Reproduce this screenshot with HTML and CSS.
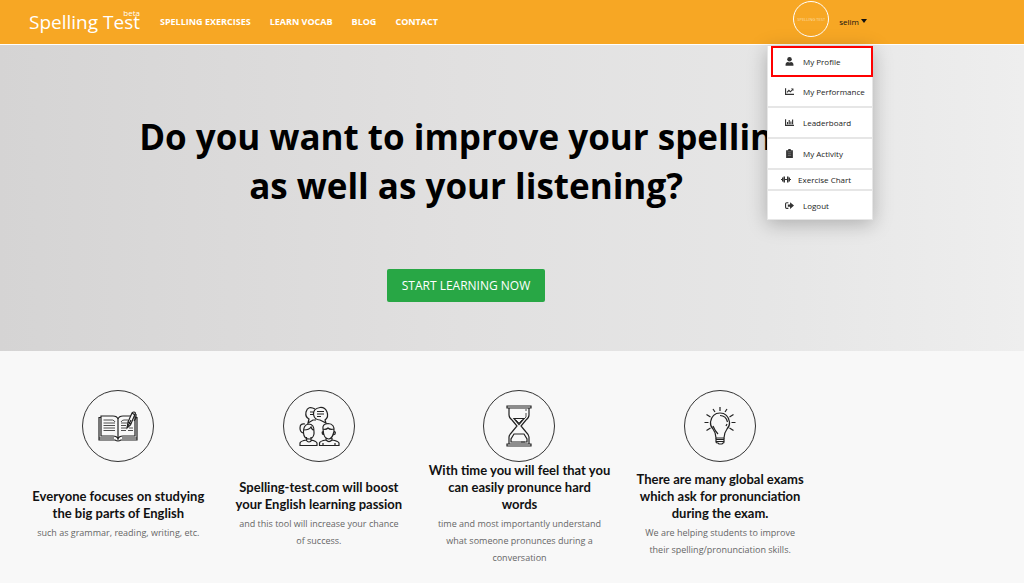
FILE: index.html
```html
<!doctype html>
<html lang="en">
<head>
	<meta charset="utf-8">
	<meta name="viewport" content="width=device-width, initial-scale=1">
	<title>Spelling Test</title>
	<link rel="stylesheet" href="styles.css">
</head>
<body>
	<header class="header">
		<a class="logo" href="#">Spelling Test<span class="beta">beta</span></a>
		<nav class="nav">
			<a href="#">SPELLING EXERCISES</a>
			<a href="#">LEARN VOCAB</a>
			<a href="#">BLOG</a>
			<a href="#">CONTACT</a>
		</nav>
		<div class="user">
			<span class="avatar">SPELLING TEST</span>
			<button class="user-name" type="button">selim<span class="caret"></span></button>
			<div class="menu">
				<a class="active" href="#">
					<svg viewBox="0 0 16 16"><circle cx="8" cy="4.2" r="4"/><path d="M1 15.5v-2.2C1 10.600 3 9 5 9c1.800 1 4.200 1 6 0 2 0 4 1.600 4 4.300v2.200z"/></svg>
					My Profile
				</a>
				<a href="#">
					<svg viewBox="0 0 16 16"><path d="M0 2h2v10h14v2H0z"/><path d="M3.500 9.500 7 6l2.500 2.500 4-4" fill="none" stroke="#333" stroke-width="2"/><path d="M10.500 2.500H15V7z"/></svg>
					My Performance
				</a>
				<a href="#">
					<svg viewBox="0 0 16 16"><path d="M0 2h2v10h14v2H0zM3.500 7h2v4h-2zM6.500 3.500h2V11h-2zM9.500 6h2v5h-2zM12.500 2.500h2V11h-2z"/></svg>
					Leaderboard
				</a>
				<a href="#">
					<svg viewBox="0 0 16 16"><path d="M2 2h3.500a2.500 2.500 0 0 1 5 0H14v14H2z"/><path d="M4.500 5h7M5 8.500h6M5 11.500h6" stroke="#999" stroke-width="1"/></svg>
					My Activity
				</a>
				<a class="short" href="#">
					<svg class="wide" viewBox="0 0 20 16"><path d="M0 7h2v2H0zM2 4h2.500v8H2zM5 2h3v12H5zM8 7h4v2H8zM12 2h3v12h-3zM15.500 4H18v8h-2.500zM18 7h2v2h-2z"/></svg>
					Exercise Chart
				</a>
				<a href="#">
					<svg viewBox="0 0 16 16"><path d="M6 2H3Q0 2 0 5v6q0 3 3 3h3v-2H3q-1 0-1-1V5q0-1 1-1h3z"/><path d="M5 6h4V2L16 8 9 14v-4H5z"/></svg>
					Logout
				</a>
			</div>
		</div>
	</header>

	<section class="hero">
		<h1>Do you want to improve your spelling<br>as well as your listening?</h1>
		<a class="start" href="#">START LEARNING NOW</a>
	</section>

	<section class="features">
		<article class="feature">
			<div class="circle">
				<!-- open book and pen -->
				<svg viewBox="0 0 42 42">
					<path d="M4 12.500H2V35h16q3 2 6 0h16V12.500h-2"/>
					<path d="M4 31V11h12q4 0 5 3 1-3 5-3h12v20H26q-4 0-5 3-1-3-5-3zM21 14v19M2 33h15M25 33h15"/>
					<path class="thin" d="M6.500 15h9q2 .5 2.500 2M6.500 18H18M6.500 20.500H18M6.500 23H18M6.500 25.500H18M24 17q1-2 3-2h4M24 18h6M24 20.500h5M24 23h5M24 25.500h5M32 23h4M31 25.500h5"/>
					<path class="paper" d="m30 23 1-6 4-9q2-2 3.500 0l-5 12z"/>
					<path d="m31 17 3 2M35 8l3 2M30 23l4-8M39 9v4l-2 3"/>
				</svg>
			</div>
			<div class="text">
				<h2>Everyone focuses on studying<br>the big parts of English</h2>
				<p>such as grammar, reading, writing, etc.</p>
			</div>
		</article>
		<article class="feature">
			<div class="circle">
				<!-- two people talking -->
				<svg viewBox="0 0 42 42">
					<path d="M17 4q-7-4-9 3-1 5 3 7l-1 4 5-3h3"/>
					<path class="paper" d="M27 15q4-3 2-8-2-5-7-4.500-7 1-6.500 7Q16.500 15 22 15l6 3z"/>
					<path d="M12 7h3M12 9.500h3M19 6.500h7M19 9h7M19 11.500h4"/>
					<path d="M5.500 28q-.5-8 5-9 6 0 5.500 8v2q-1 5-5 5-5 0-5.500-6zM6 25q5 0 7-3 1 3 3 3M7 19q-5-1-5 4 0 4 3 5M8.500 32v3q-6 1-6.500 3v2.500h17V38q-1-2-6-3v-3M8 35q3 4 6 0"/>
					<path d="M25 24q-1-5 5-5.500 7 .5 6 8l-1 3q-1 4-4.500 4.500Q26 33 25.500 28zM25 24q3 1 5-1 2 2 6 1M25.500 27q-2-1-1 2l2 1M36 27q2-1 1 2l-2 1M28 33v2q-6 1-6.500 3v2.500H41V38q-1-2-7-3v-2M28 35q3 3 6 0M25 38v2M37 38v2"/>
				</svg>
			</div>
			<div class="text">
				<h2>Spelling-test.com will boost<br>your English learning passion</h2>
				<p>and this tool will increase your chance<br>of success.</p>
			</div>
		</article>
		<article class="feature">
			<div class="circle">
				<!-- hourglass -->
				<svg viewBox="0 0 42 42">
					<path d="M9 1h24v2H9zM9 39h24v2H9z"/>
					<path d="M11 3v7q0 3 3 5l5 6-5 6q-3 3-3 5v7M31 3v7q0 3-3 5l-5 6 5 6q3 3 3 5v7"/>
					<path d="M16 13.500h10l-5 6zM16 29h10l3 5v3H13v-3z"/>
					<path class="thin" d="m18 15 3 3 3-3M28 4v2M28 8v4l-2 2M23 37h4"/>
				</svg>
			</div>
			<div class="text">
				<h2>With time you will feel that you<br>can easily pronunce hard<br>words</h2>
				<p>time and most importantly understand<br>what someone pronunces during a<br>conversation</p>
			</div>
		</article>
		<article class="feature">
			<div class="circle">
				<!-- light bulb -->
				<svg viewBox="0 0 42 42">
					<path d="M17 33q0-5-3-9-3-3-2.500-7Q13 8 21 8t9.500 9q.5 4-2.500 7-3 4-3 9z"/>
					<path d="M14 21q2 5 5 8M21 10.500q6 0 7.500 6.500M28 19l-1 2"/>
					<path d="M17 33v4q0 1 2 1l1 1h3l1-1q1 0 1-1v-4M17 34.500h8M17 36.500h8"/>
					<path d="M21 2v4M14 4l2 3M28 4l-2 3M7.500 9.500l4 2.500M34.500 9.500l-4 2.500M5.500 17.500h4M32.500 17.500h4M7.500 25.500l4-2.500M34.500 25.500l-4-2.500"/>
				</svg>
			</div>
			<div class="text">
				<h2>There are many global exams<br>which ask for pronunciation<br>during the exam.</h2>
				<p>We are helping students to improve<br>their spelling/pronunciation skills.</p>
			</div>
		</article>
	</section>
</body>
</html>
```
FILE: styles.css
```css
* {
	box-sizing: border-box;
}
body {
	margin: 0;
	background: #f8f8f8;
	font-family: "Open Sans", sans-serif;
	color: #000;
}
a {
	color: inherit;
	text-decoration: none;
}

.header {
	display: flex;
	align-items: center;
	height: 45px;
	padding: 0 157px 0 29px;
	background: #f7a724;
	border-bottom: 1px solid #fff;
	color: #fff;
}
.logo {
	position: relative;
	font-size: 19px;
}
.beta {
	position: absolute;
	top: 0;
	right: 0;
	font-size: 8px;
	line-height: 8px;
}
.nav {
	display: flex;
	gap: 19px;
	margin-left: 20px;
	padding-bottom: 2px;
	font-size: 9px;
	font-weight: bold;
}
.user {
	position: relative;
	display: flex;
	align-items: center;
	align-self: stretch;
	gap: 10px;
	margin-left: auto;
	padding-bottom: 2px;
}
.avatar {
	display: flex;
	align-items: center;
	justify-content: center;
	width: 36px;
	height: 36px;
	margin-bottom: 4px;
	border: 1px solid #fff;
	border-radius: 50%;
	font-size: 4px;
	white-space: nowrap;
	color: #fbdca6;
}
.user-name {
	display: flex;
	align-items: center;
	gap: 2px;
	padding: 0;
	border: 0;
	background: none;
	font: 8px "Open Sans", sans-serif;
	color: #111;
}
.caret {
	border: 3px solid transparent;
	border-top: 4px solid #111;
	border-bottom: 0;
}

.menu {
	position: absolute;
	top: 46px;
	right: -6px;
	width: 106px;
	background: #fff;
	border: 1px solid #e6e6e6;
	border-top: 0;
	box-shadow: 0 4px 18px rgba(0, 0, 0, 0.25);
	font-size: 8px;
	color: #222;
}
.menu a {
	display: flex;
	align-items: center;
	gap: 9px;
	height: 31px;
	padding-left: 17px;
	border-bottom: 2px solid #e6e6e6;
	white-space: nowrap;
}
.menu a:last-child {
	height: 28px;
	border-bottom: 0;
}
.menu .active {
	margin-left: 3px;
	margin-right: -1px;
	padding-left: 12px;
	border: 2px solid #ff0000;
}
.menu .short {
	height: 21px;
	gap: 7px;
	padding-left: 13px;
}
.menu svg {
	width: 9px;
	height: 9px;
	fill: #333;
}
.menu .wide {
	width: 10px;
}

.hero {
	display: flex;
	flex-direction: column;
	align-items: center;
	gap: 59px;
	padding: 67px 92px 49px 0;
	background: linear-gradient(to right, #d5d4d4, #e1e0e0 45%, #e6e6e6 75%, #eee);
}
h1 {
	margin: 0;
	font-size: 35px;
	line-height: 49px;
	text-align: center;
}
.start {
	padding: 0 15px;
	background: #28a745;
	border-radius: 2px;
	font-size: 12px;
	line-height: 33px;
	color: #fff;
}

.features {
	display: grid;
	grid-template-columns: repeat(5, 1fr);
	padding: 39px 3px 16px 18px;
}
.feature {
	display: flex;
	flex-direction: column;
	align-items: center;
	text-align: center;
}
.circle {
	display: flex;
	align-items: center;
	justify-content: center;
	width: 72px;
	height: 72px;
	border: 1px solid #333;
	border-radius: 50%;
}
.circle svg {
	width: 42px;
	height: 42px;
	fill: none;
	stroke: #222;
	stroke-width: 1.2;
}
.circle .thin {
	stroke-width: 0.8;
}
.circle .paper {
	fill: #f8f8f8;
}
.text {
	display: flex;
	flex: 1;
	flex-direction: column;
	justify-content: center;
	gap: 2px;
}
h2 {
	margin: 0;
	font: bold 13px/17px Lato, sans-serif;
	color: #111;
}
p {
	margin: 0;
	font-size: 9px;
	line-height: 17px;
	color: #666;
}
```
